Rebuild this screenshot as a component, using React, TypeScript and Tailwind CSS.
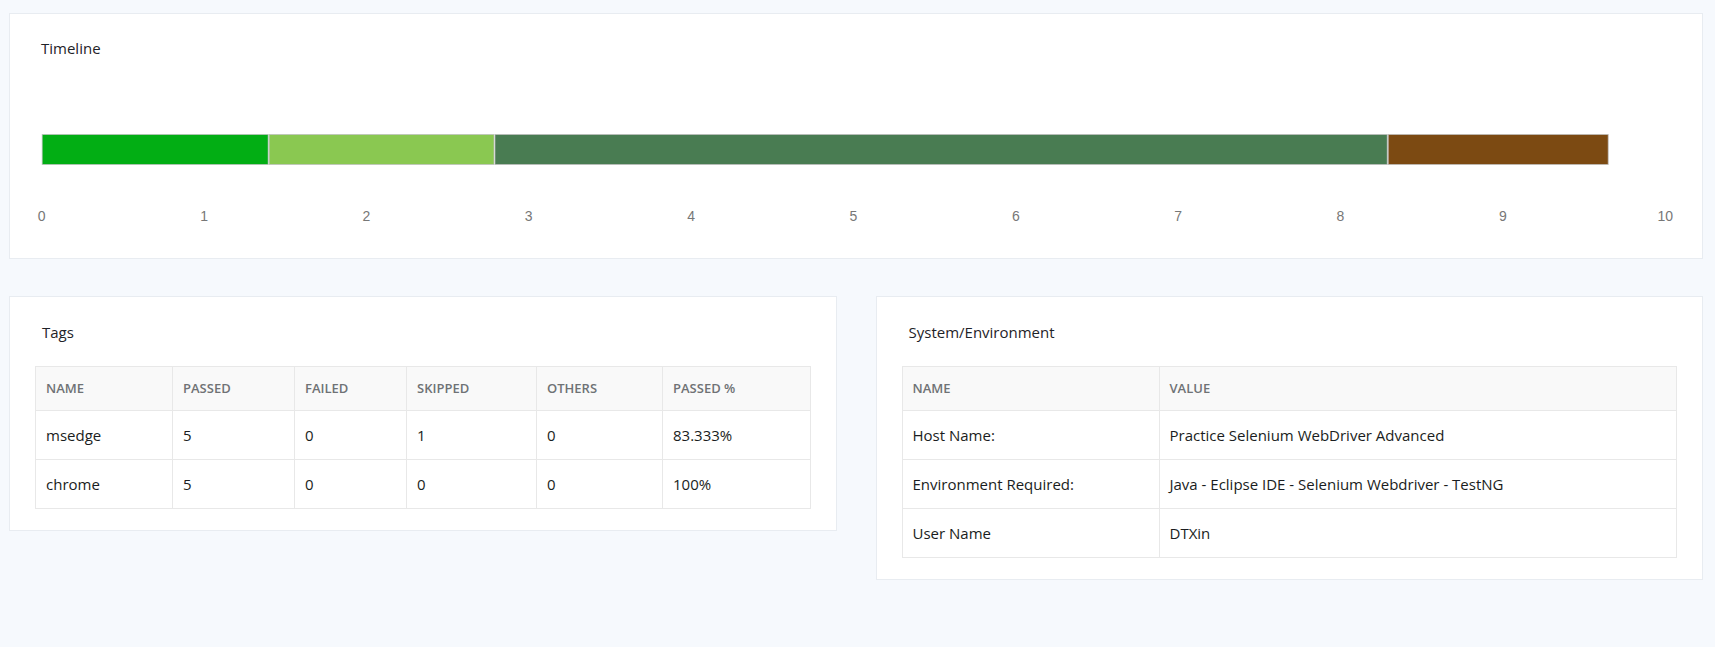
const tags = [
  { name: 'msedge', passed: 5, failed: 0, skipped: 1, others: 0, pct: '83.333%' },
  { name: 'chrome', passed: 5, failed: 0, skipped: 0, others: 0, pct: '100%' },
]

const env = [
  ['Host Name:', 'Practice Selenium WebDriver Advanced'],
  ['Environment Required:', 'Java - Eclipse IDE - Selenium Webdriver - TestNG'],
  ['User Name', 'DTXin'],
]

// chart area: value 0 sits at x0, each unit is `unit` px
const x0 = 6.7
const unit = 162.35
const segments = [
  { from: 0, to: 1.398, color: '#02ae14' },
  { from: 1.398, to: 2.789, color: '#8ac851' },
  { from: 2.789, to: 8.291, color: '#497c52' },
  { from: 8.291, to: 9.652, color: '#7c4a12' },
]

function Timeline() {
  return (
    <svg width="1642" height="175" className="block">
      {segments.map((s, i) => (
        <rect
          key={i}
          x={x0 + s.from * unit + 0.5}
          y={76.5}
          width={(s.to - s.from) * unit - 1}
          height={30}
          fill={s.color}
          stroke="rgba(190,190,190,0.7)"
          strokeWidth={1}
        />
      ))}
      {Array.from({ length: 11 }, (_, i) => (
        <text
          key={i}
          x={x0 + i * unit}
          y={163}
          textAnchor="middle"
          fontSize="14"
          fill="#777"
          fontFamily="'Liberation Sans', Arial, sans-serif"
        >
          {i}
        </text>
      ))}
    </svg>
  )
}

function Card({ title, children }: { title: string; children: React.ReactNode }) {
  return (
    <div className="bg-white border border-[#e8ecf1] px-[25px] pt-[25px] pb-[21px]">
      <div className="pl-[7px] text-[15px] leading-[20px] text-[#1f2328] mb-[24px]">{title}</div>
      {children}
    </div>
  )
}

const th = 'border border-[#e8e8e8] px-[10px] py-[12px] text-left text-[13px] leading-[19px] font-semibold text-[#6f7275] uppercase'
const td = 'border border-[#e8e8e8] px-[10px] py-[14px] text-[15px] leading-[20px] text-[#1a1d21]'

export default function App() {
  return (
    <div className="min-h-screen bg-[#f6f9fd] pl-[9px] pr-[12px] pt-[13px] pb-10" style={{ fontFamily: "'Open Sans', 'Noto Sans', sans-serif" }}>
      <div className="bg-white border border-[#e8ecf1] px-[25px] pt-[24px] pb-[25px]">
        <div className="pl-[6px] text-[15px] leading-[20px] text-[#1f2328]">Timeline</div>
        <Timeline />
      </div>

      <div className="grid grid-cols-2 gap-[39px] items-start mt-[37px]">
        <Card title="Tags">
          <table className="w-full table-fixed border-collapse">
            <colgroup>
              <col className="w-[137px]" />
              <col className="w-[122px]" />
              <col className="w-[112px]" />
              <col className="w-[130px]" />
              <col className="w-[126px]" />
              <col />
            </colgroup>
            <thead>
              <tr className="bg-[#f9f9f9]">
                <th className={th}>Name</th>
                <th className={th}>Passed</th>
                <th className={th}>Failed</th>
                <th className={th}>Skipped</th>
                <th className={th}>Others</th>
                <th className={th}>Passed %</th>
              </tr>
            </thead>
            <tbody>
              {tags.map((t) => (
                <tr key={t.name}>
                  <td className={td}>{t.name}</td>
                  <td className={td}>{t.passed}</td>
                  <td className={td}>{t.failed}</td>
                  <td className={td}>{t.skipped}</td>
                  <td className={td}>{t.others}</td>
                  <td className={td}>{t.pct}</td>
                </tr>
              ))}
            </tbody>
          </table>
        </Card>

        <Card title="System/Environment">
          <table className="w-full table-fixed border-collapse">
            <colgroup>
              <col className="w-[257px]" />
              <col />
            </colgroup>
            <thead>
              <tr className="bg-[#f9f9f9]">
                <th className={th}>Name</th>
                <th className={th}>Value</th>
              </tr>
            </thead>
            <tbody>
              {env.map(([k, v]) => (
                <tr key={k}>
                  <td className={td}>{k}</td>
                  <td className={td}>{v}</td>
                </tr>
              ))}
            </tbody>
          </table>
        </Card>
      </div>
    </div>
  )
}
